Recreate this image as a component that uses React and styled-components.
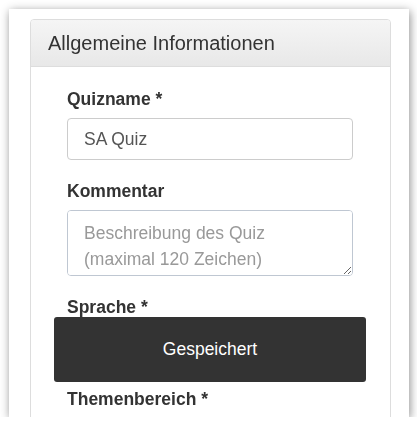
import React from 'react';
import styled, { createGlobalStyle } from 'styled-components';

const GlobalStyle = createGlobalStyle`
  html, body {
    margin: 0;
    padding: 0;
    background: #fff;
  }
  body {
    font-family: "Liberation Sans", Arial, Helvetica, sans-serif;
    color: #333;
  }
`;

const Frame = styled.div`
  position: relative;
  margin: 9px 0 0 9px;
  width: 400px;
  height: 408px;
  background: #fff;
  overflow: hidden;
  box-shadow: 1px 2px 9px rgba(0, 0, 0, 0.45);
  padding: 10px 0 0 21px;
  box-sizing: border-box;
`;

const Panel = styled.div`
  width: 361px;
  border: 1px solid #ddd;
  border-radius: 4px;
  background: #fff;
  box-sizing: border-box;
`;

const PanelHeading = styled.div`
  height: 47px;
  padding: 0 17px;
  display: flex;
  align-items: center;
  background: linear-gradient(to bottom, #f5f5f5 0%, #e8e8e8 100%);
  border-bottom: 1px solid #ddd;
  border-radius: 3px 3px 0 0;
  font-size: 20px;
  color: #333;
  box-sizing: border-box;
`;

const PanelBody = styled.div`
  padding: 20px 37px 0 36px;
`;

const FormGroup = styled.div`
  margin-bottom: 19px;
`;

const Label = styled.label`
  display: block;
  font-weight: bold;
  font-size: 17.5px;
  line-height: 25px;
  margin-bottom: 6px;
  color: #333;
`;

const Input = styled.input`
  display: block;
  width: 100%;
  height: 42px;
  padding: 0 16px;
  box-sizing: border-box;
  border: 1px solid #ccc;
  border-radius: 4px;
  font-family: "Liberation Sans", Arial, sans-serif;
  font-size: 17.5px;
  color: #555;
  background: #fff;
  outline: none;
`;

const TextArea = styled.textarea`
  display: block;
  width: 100%;
  height: 66px;
  padding: 9px 16px;
  box-sizing: border-box;
  border: 1px solid #bfc7d2;
  border-radius: 4px;
  font-family: "Liberation Sans", Arial, sans-serif;
  font-size: 17.5px;
  line-height: 26px;
  color: #555;
  resize: vertical;
  outline: none;
  &::placeholder {
    color: #999;
  }
`;

const Select = styled.select`
  display: block;
  width: 100%;
  height: 42px;
  padding: 0 16px;
  box-sizing: border-box;
  border: 1px solid #ccc;
  border-radius: 4px;
  font-family: "Liberation Sans", Arial, sans-serif;
  font-size: 17.5px;
  color: #555;
  background: #fff;
`;

const Toast = styled.div`
  position: absolute;
  left: 45px;
  top: 308px;
  width: 312px;
  height: 65px;
  background: #333;
  border-radius: 3px;
  color: #fff;
  font-size: 17.5px;
  display: flex;
  align-items: center;
  justify-content: center;
`;

export default function App() {
  return (
    <>
      <GlobalStyle />
      <Frame>
        <Panel>
          <PanelHeading>Allgemeine Informationen</PanelHeading>
          <PanelBody>
            <FormGroup>
              <Label>Quizname *</Label>
              <Input defaultValue="SA Quiz" />
            </FormGroup>
            <FormGroup>
              <Label>Kommentar</Label>
              <TextArea placeholder={'Beschreibung des Quiz\n(maximal 120 Zeichen)'} />
            </FormGroup>
            <FormGroup>
              <Label>Sprache *</Label>
              <Select defaultValue="de">
                <option value="de">Deutsch</option>
              </Select>
            </FormGroup>
            <FormGroup>
              <Label>Themenbereich *</Label>
              <Select defaultValue="">
                <option value="">Bitte wählen</option>
              </Select>
            </FormGroup>
          </PanelBody>
        </Panel>
        <Toast>Gespeichert</Toast>
      </Frame>
    </>
  );
}
